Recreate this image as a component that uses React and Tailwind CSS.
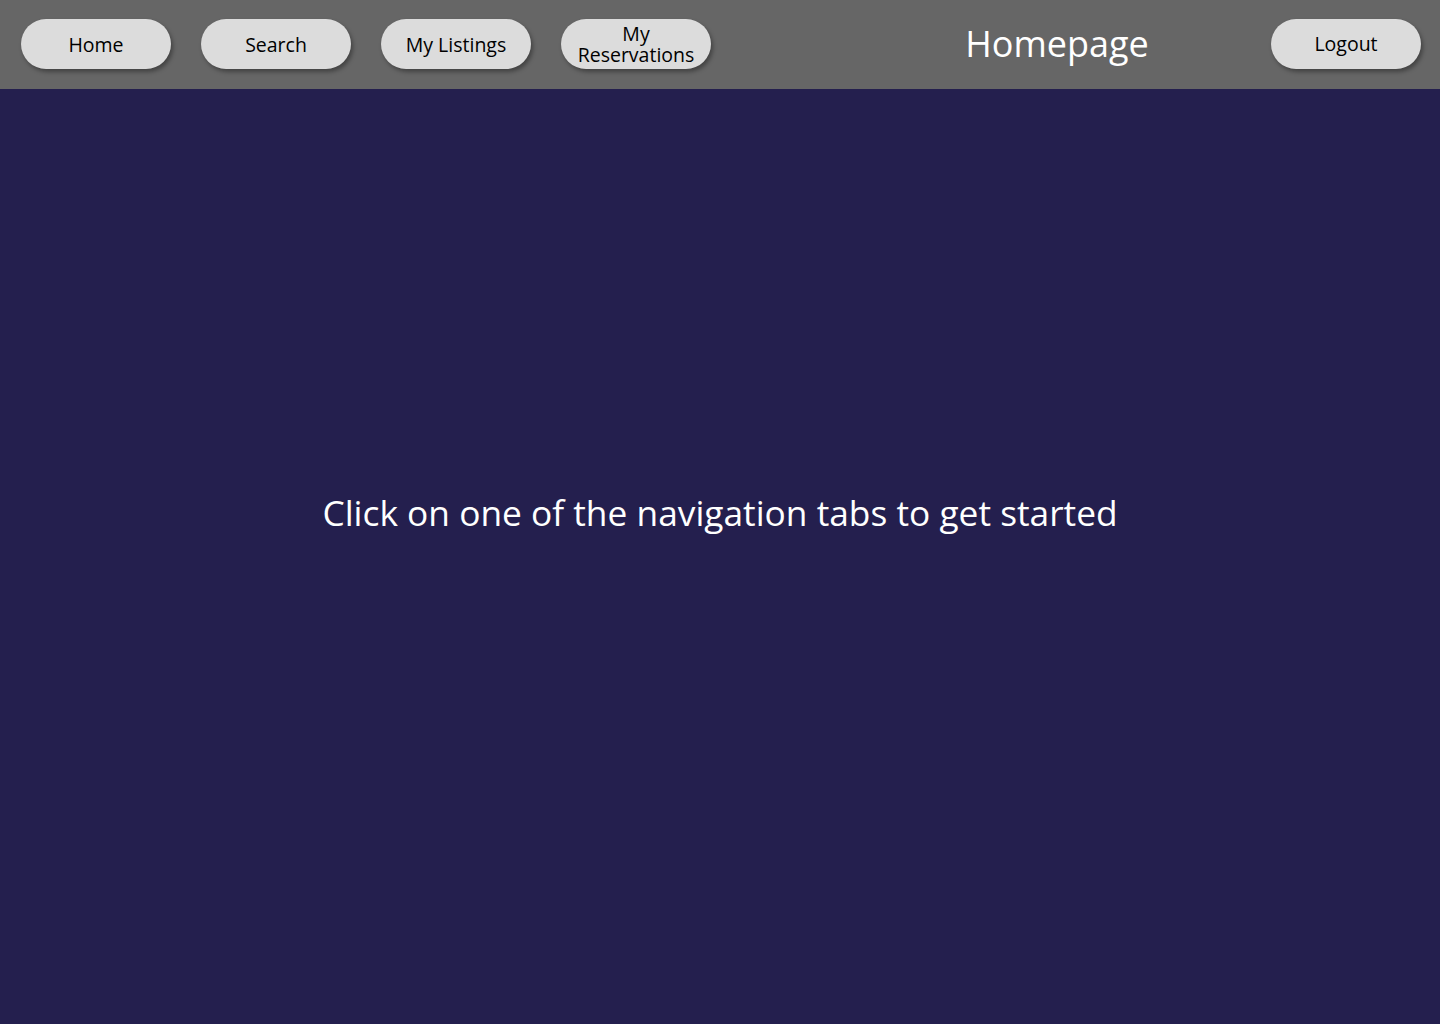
export default function App() {
  const tabs = ["Home", "Search", "My Listings", "My Reservations"];

  return (
    <div className="min-h-screen flex flex-col bg-[#241f4e]" style={{ fontFamily: '"Open Sans", "Noto Sans", sans-serif' }}>
      <header className="h-[89px] bg-[#666666] flex items-center pl-[21px] pr-[19px] pb-px">
        <nav className="flex items-center gap-[30px]">
          {tabs.map((tab) => (
            <button
              key={tab}
              className="w-[150px] h-[50px] rounded-full bg-[#dcdcdc] text-black text-[19.5px] leading-[21px] px-3 shadow-[2px_3px_4px_rgba(0,0,0,0.35)]"
            >
              {tab}
            </button>
          ))}
        </nav>
        <div className="flex-1 flex justify-center pl-[132px]">
          <h1 className="text-white text-[36px] font-normal">Homepage</h1>
        </div>
        <button className="w-[150px] h-[50px] rounded-full bg-[#dcdcdc] text-black text-[19.5px] shadow-[2px_3px_4px_rgba(0,0,0,0.35)]">
          Logout
        </button>
      </header>
      <main className="flex-1 flex items-center justify-center pb-[88px]">
        <p className="text-white text-[35.3px]">Click on one of the navigation tabs to get started</p>
      </main>
    </div>
  );
}
